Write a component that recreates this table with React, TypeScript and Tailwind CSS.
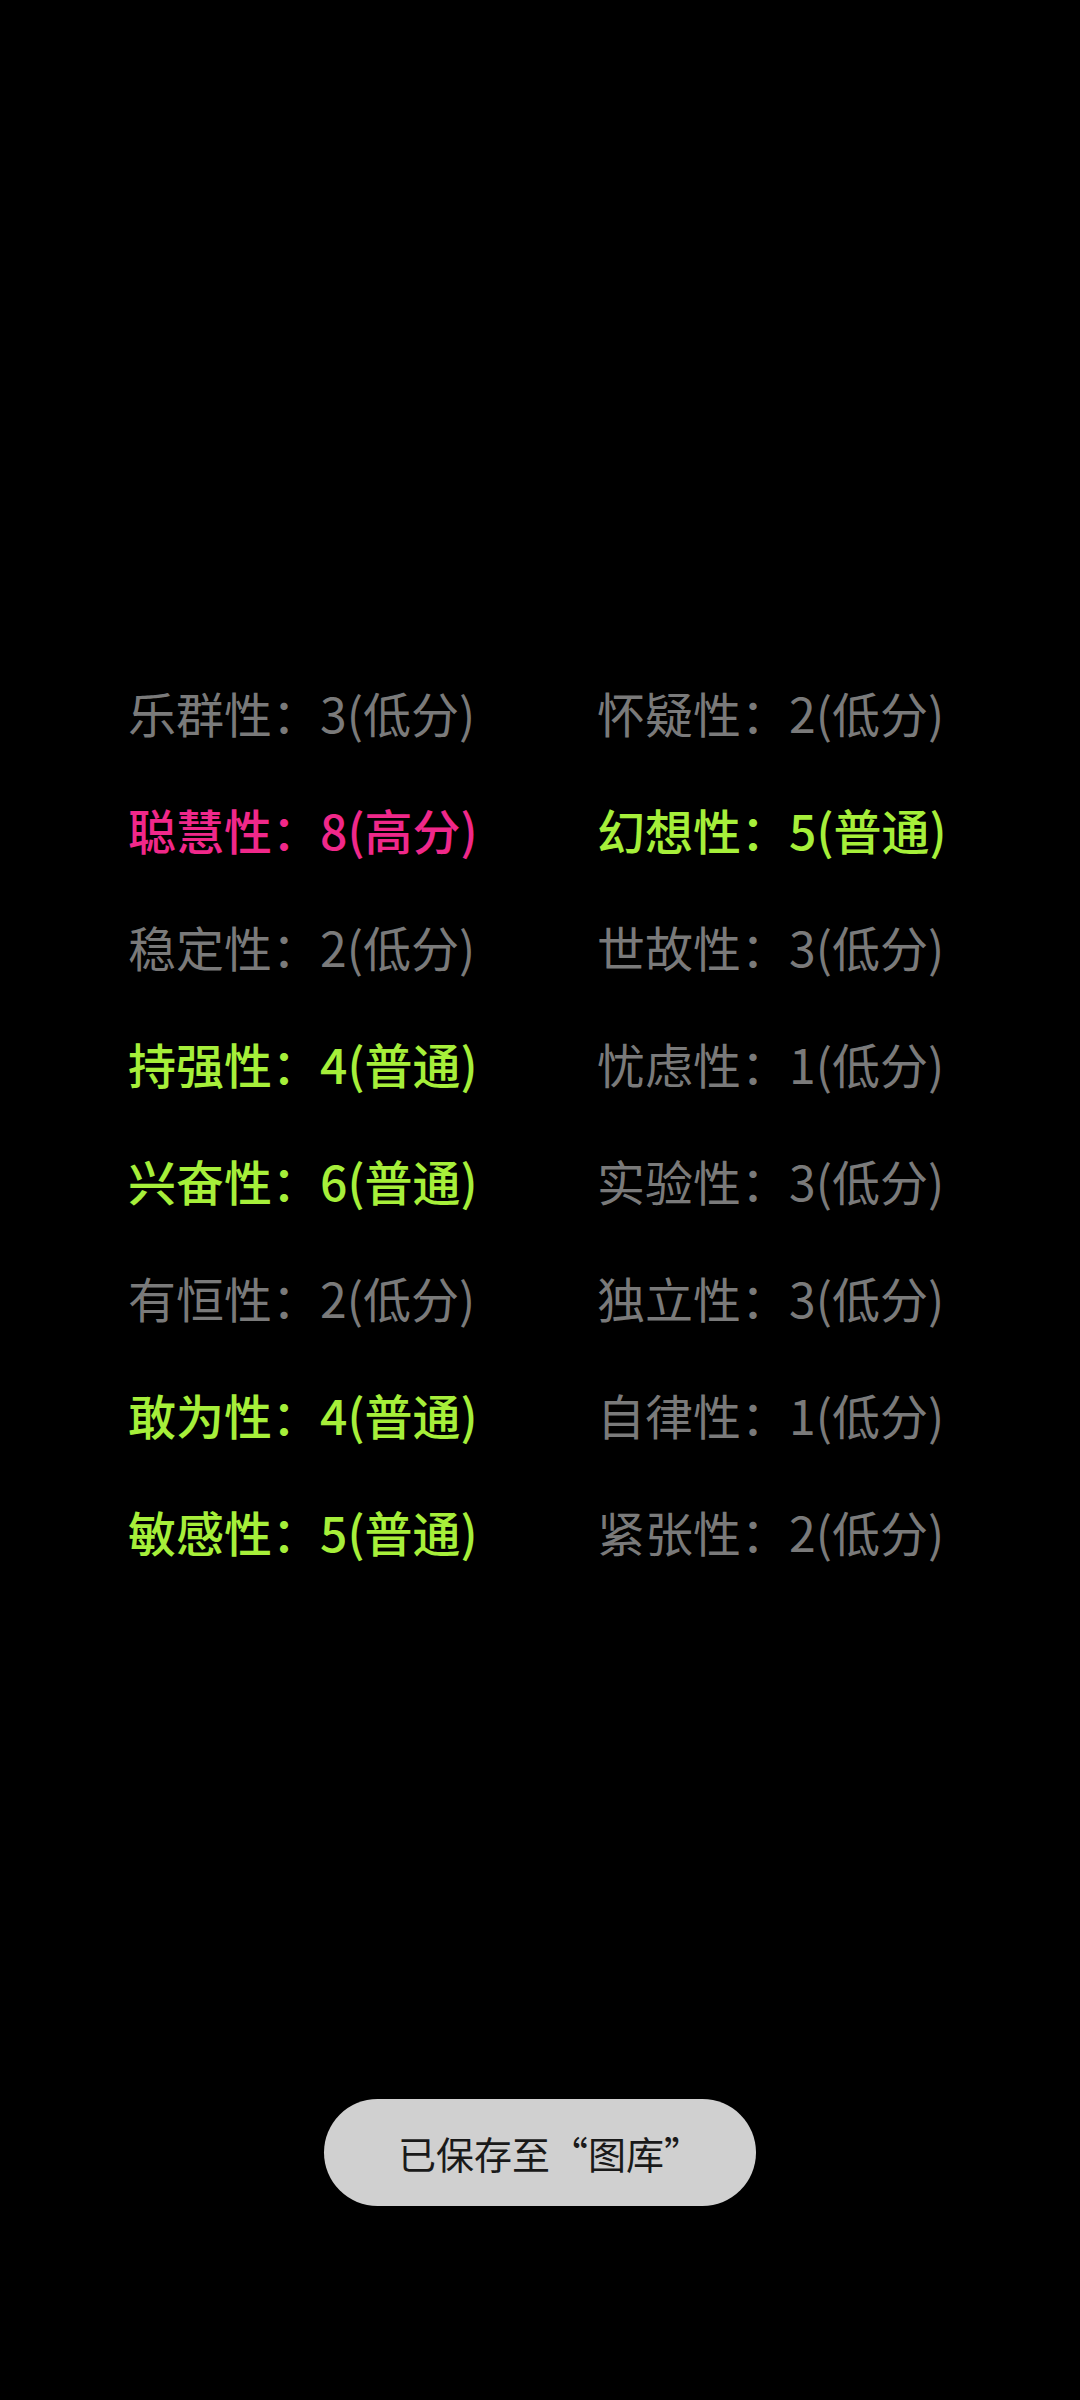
import React from "react";

type Item = { label: string; score: string; color: "gray" | "pink" | "green" };

const rows: [Item, Item][] = [
  [{ label: "乐群性", score: "3(低分)", color: "gray" }, { label: "怀疑性", score: "2(低分)", color: "gray" }],
  [{ label: "聪慧性", score: "8(高分)", color: "pink" }, { label: "幻想性", score: "5(普通)", color: "green" }],
  [{ label: "稳定性", score: "2(低分)", color: "gray" }, { label: "世故性", score: "3(低分)", color: "gray" }],
  [{ label: "持强性", score: "4(普通)", color: "green" }, { label: "忧虑性", score: "1(低分)", color: "gray" }],
  [{ label: "兴奋性", score: "6(普通)", color: "green" }, { label: "实验性", score: "3(低分)", color: "gray" }],
  [{ label: "有恒性", score: "2(低分)", color: "gray" }, { label: "独立性", score: "3(低分)", color: "gray" }],
  [{ label: "敢为性", score: "4(普通)", color: "green" }, { label: "自律性", score: "1(低分)", color: "gray" }],
  [{ label: "敏感性", score: "5(普通)", color: "green" }, { label: "紧张性", score: "2(低分)", color: "gray" }],
];

function Cell({ item }: { item: Item }) {
  const cls =
    item.color === "pink"
      ? "text-[#f0288a] font-medium"
      : item.color === "green"
      ? "text-[#a6ef3a] font-medium"
      : "text-[#7a7a7a] font-normal";
  return (
    <div className={`whitespace-nowrap text-[48px] leading-none ${cls}`}>
      {item.label}：{item.score}
    </div>
  );
}

export default function App() {
  return (
    <div
      className="w-[1080px] h-[2400px] bg-black flex flex-col"
      style={{ fontFamily: '"Noto Sans CJK SC", "Noto Sans", sans-serif' }}
    >
      <div className="h-[653px]" />
      <div className="flex flex-col pl-[128px]">
        {rows.map((r, i) => (
          <div key={i} className="flex items-center h-[117px]">
            <div className="w-[469px]">
              <Cell item={r[0]} />
            </div>
            <div>
              <Cell item={r[1]} />
            </div>
          </div>
        ))}
      </div>
      <div className="flex-1" />
      <div className="flex justify-center mb-[194px]">
        <div className="w-[432px] h-[107px] rounded-full bg-[#d0d0d0] flex items-center justify-center">
          <span className="pl-[20px] text-[38px] text-[#1a1a1a] leading-none">已保存至“图库”</span>
        </div>
      </div>
    </div>
  );
}
